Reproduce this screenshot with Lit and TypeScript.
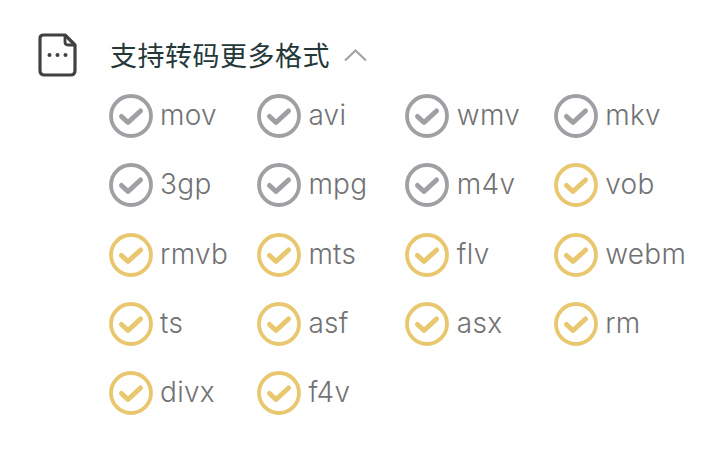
import { LitElement, html, css, svg } from "lit";
import { customElement } from "lit/decorators.js";

const GREY = ["mov","avi","wmv","mkv","3gp","mpg","m4v"];
const ALL = ["mov","avi","wmv","mkv","3gp","mpg","m4v","vob","rmvb","mts","flv","webm","ts","asf","asx","rm","divx","f4v"];

@customElement("app-root")
export class AppRoot extends LitElement {
  static styles = css`
    :host { display: block; width: 712px; height: 470px; background: #fff; overflow: hidden; box-sizing: border-box; padding: 33px 0 0 38px; font-family: "Inter", "Noto Sans CJK SC", sans-serif; }
    .head { display: flex; align-items: center; height: 44px; }
    .file { width: 39px; height: 44px; flex: none; display: block; }
    .title { margin-left: 33px; font: 400 27px/44px "Noto Sans CJK SC", sans-serif; letter-spacing: 0.5px; color: #24383a; white-space: nowrap; }
    .chev { margin-left: 13px; width: 25px; height: 14px; flex: none; display: block; }
    .grid { display: grid; grid-template-columns: repeat(4, 148.4px); grid-auto-rows: 69.3px; margin: 17px 0 0 70.5px; }
    .item { display: flex; align-items: center; height: 44px; }
    .check { width: 44px; height: 44px; flex: none; display: block; }
    .label { margin-left: 7.5px; padding-bottom: 2px; font-size: 28px; font-weight: 300; line-height: 36px; letter-spacing: 0.3px; color: #727275; }
  `;

  private check(color: string) {
    return svg`<svg class="check" viewBox="0 0 44 44" fill="none">
      <circle cx="22" cy="22" r="20" stroke="${color}" stroke-width="3.8"/>
      <path d="M12.5 22.5 L19 28.5 L31.5 17" stroke="${color}" stroke-width="5" stroke-linecap="round" stroke-linejoin="round"/>
    </svg>`;
  }

  render() {
    return html`
      <div class="head">
        <svg class="file" viewBox="0 0 39 44" fill="none">
          <path d="M5.5 2 H27 L37 12 V37.5 Q37 42 32.5 42 H6.5 Q2 42 2 37.5 V5.5 Q2 2 5.5 2 Z" stroke="#3f4143" stroke-width="3.2" stroke-linejoin="round"/>
          <path d="M27 2 V9 Q27 12 30 12 H37" stroke="#3f4143" stroke-width="2.8" stroke-linejoin="round"/>
          <circle cx="11.5" cy="22" r="2" fill="#3f4143"/>
          <circle cx="19.5" cy="22" r="2" fill="#3f4143"/>
          <circle cx="27.5" cy="22" r="2" fill="#3f4143"/>
        </svg>
        <span class="title">支持转码更多格式</span>
        <svg class="chev" viewBox="0 0 25 14" fill="none">
          <path d="M2 12.5 L12.5 2.5 L23 12.5" stroke="#a3a3a3" stroke-width="2.2"/>
        </svg>
      </div>
      <div class="grid">
        ${ALL.map(n => html`<div class="item">
          ${this.check(GREY.includes(n) ? "#a0a0a4" : "#e8c76e")}
          <span class="label">${n}</span>
        </div>`)}
      </div>
    `;
  }
}
